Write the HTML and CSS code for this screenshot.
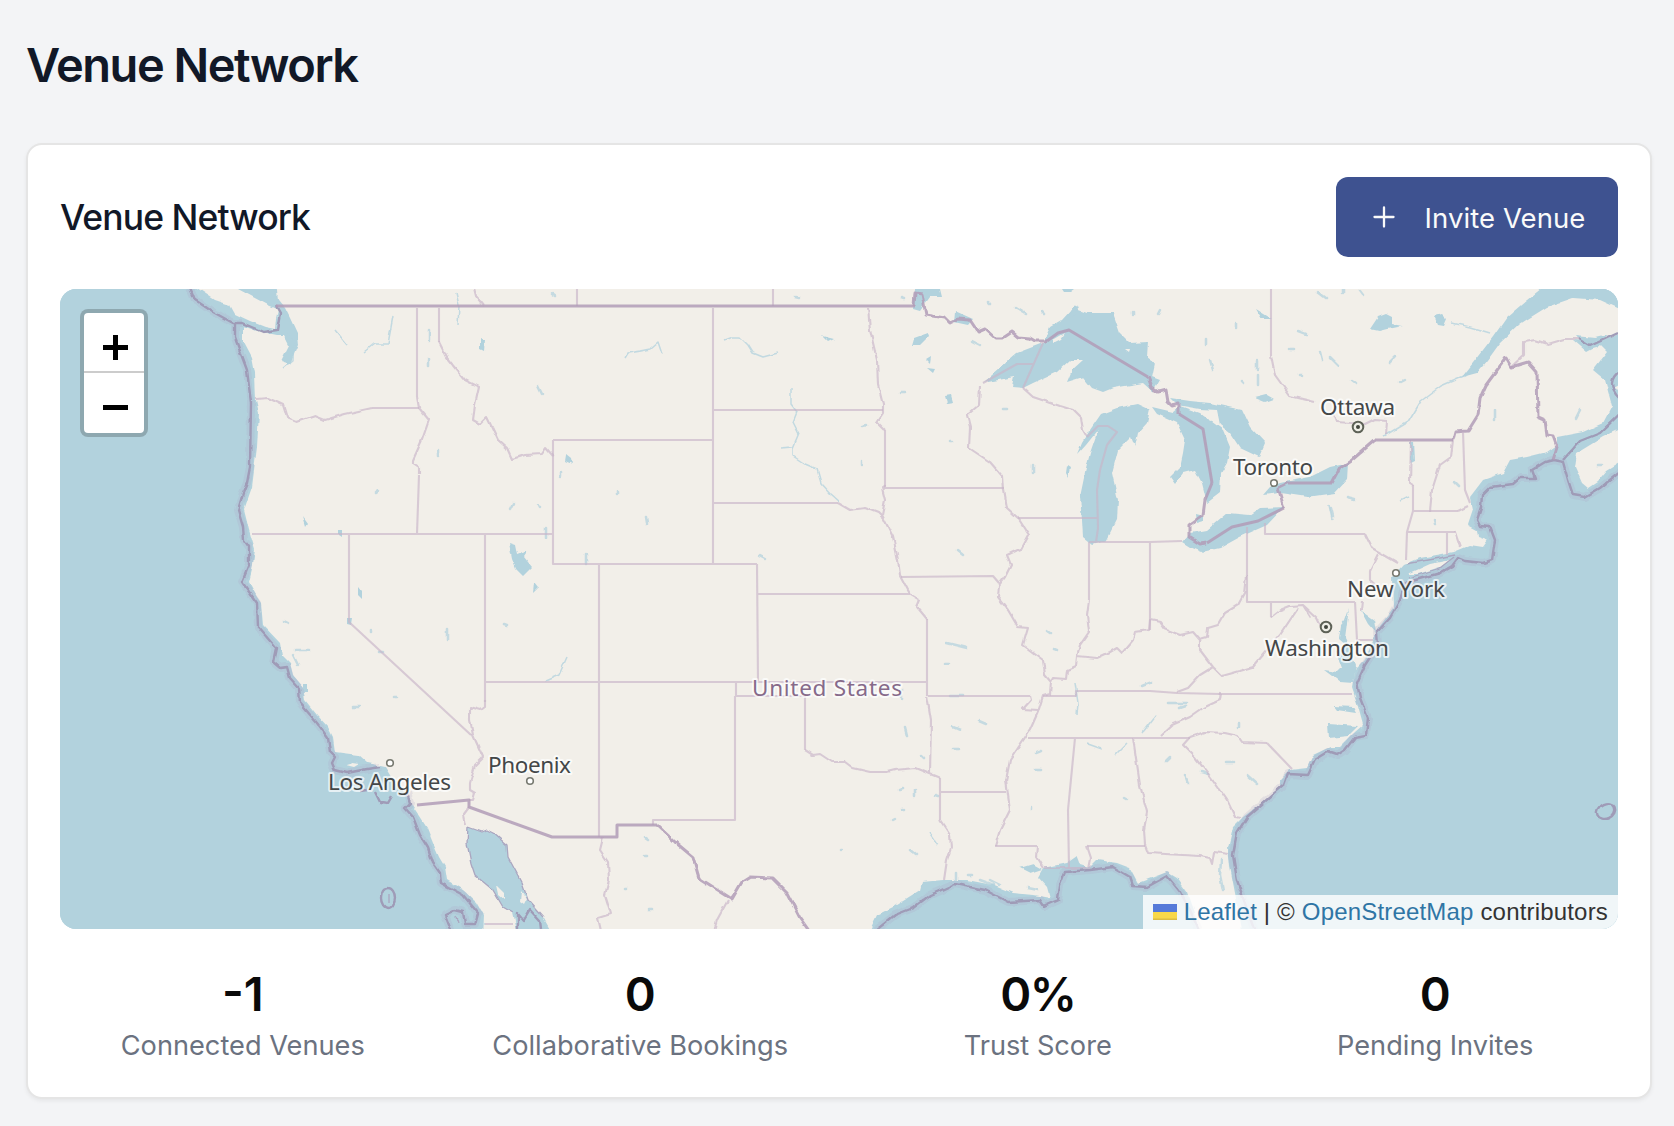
FILE: index.html
```html
<!DOCTYPE html>
<html lang="en">
<head>
<meta charset="utf-8">
<title>Venue Network</title>
<link rel="stylesheet" href="styles.css">
</head>
<body>
<main class="page">
  <h1 class="page-title">Venue Network</h1>
  <section class="card">
    <header class="card-header">
      <h2 class="card-title">Venue Network</h2>
      <button class="invite" type="button">
        <svg class="invite-icon" viewBox="0 0 32 32" aria-hidden="true"><path d="M16 6.500v19M6.500 16h19"/></svg>
        <span class="invite-label">Invite Venue</span>
      </button>
    </header>
    <div class="map">
      <svg class="map-canvas" viewBox="60 289 1558 640" aria-label="Map of the United States">
        <defs>
          <filter id="rough" filterUnits="userSpaceOnUse" x="40" y="269" width="1600" height="680">
            <feTurbulence type="fractalNoise" baseFrequency=".12" numOctaves="1" seed="4" result="n"/>
            <feDisplacementMap in="SourceGraphic" in2="n" scale="4.500" xChannelSelector="R" yChannelSelector="G"/>
          </filter>
        </defs>
        <rect class="water" x="40" y="269" width="1600" height="680"/>
        <g filter="url(#rough)">
          <!-- mainland -->
          <path class="land" d="M276 280L278 300 285 308 290 318 297 333 298 345 290 364 281 361 289 345 284 335 277 335 257 331 243 326 243 340 252 357 255 373 256 400 259 413 257 447 252 487 244 510 249 530 255 550 252 570 249 582 257 597 261 603 263 625 280 643 282 655 290 663 293 675 303 687 305 700 317 715 328 727 333 737 335 752 358 755 367 763 385 767 393 780 408 795 412 805 420 817 427 828 433 843 439 857 445 867 447 880 463 890 477 903 484 915 483 940 865 940 877 915 893 907 920 890 922 882 943 880 967 880 993 885 1013 893 1033 895 1050 898 1047 887 1038 877 1043 868 1067 863 1077 856 1080 864 1090 867 1097 860 1117 863 1130 868 1138 883 1167 872 1177 878 1188 893 1195 913 1200 940 1244 940 1235 893 1230 867 1228 847 1233 827 1243 817 1263 802 1280 787 1280 780 1290 770 1307 768 1313 755 1330 747 1340 747 1355 732 1363 725 1357 703 1352 688 1355 670 1365 660 1373 640 1377 630 1383 622 1393 608 1392 577 1403 565 1420 558 1453 552 1470 545 1483 547 1488 540 1477 530 1468 525 1473 510 1470 497 1483 480 1503 473 1510 460 1527 457 1547 452 1557 445 1557 437 1583 432 1603 423 1612 406 1605 380 1593 370 1607 352 1600 345 1587 352 1573 340 1600 342 1640 325 1640 280Z"/>
          <path class="land" d="M185 280L215 300 230 305 235 314 250 321 265 327 275 329 276 318 278 310 265 300 245 292 235 280Z"/>
          <path class="land" d="M1640 420L1603 437 1577 453 1575 467 1582 483 1588 488 1597 482 1607 470 1640 450ZM1640 372L1613 388 1640 397Z"/>
          <!-- Gulf of St Lawrence, Gulf of California -->
          <path class="water" d="M1552 280L1527 300 1507 317 1493 337 1473 363 1462 377 1477 373 1487 361 1500 343 1520 324 1547 307 1573 298 1600 300 1640 318 1640 280Z"/>
          <path class="water" d="M468 827L482 832 487 830 493 833 507 845 508 857 515 870 522 883 528 900 543 917 556 940 519 940 513 913 503 907 493 890 475 875 471 863 467 843Z"/>
          <path class="land" d="M496 885L504 893 504 899 498 894ZM521 891L527 899 524 905 520 902Z"/>
          <!-- Great Lakes -->
          <path class="water" d="M983 383L1000 368 1017 353 1043 343 1050 327 1062 320 1073 308 1087 313 1113 313 1120 333 1130 343 1148 342 1147 357 1155 363 1152 377 1160 380 1153 392 1143 383 1113 388 1103 392 1092 388 1083 377 1067 382 1072 370 1083 360 1070 360 1057 372 1033 383 1023 388 1012 387 1014 377Z"/>
          <path class="water" d="M1098 430L1086 445 1077 455 1082 443 1090 430 1101 414 1117 408 1137 404 1150 410 1147 423 1138 433 1135 447 1131 437 1118 450 1112 473 1118 500 1117 520 1107 540 1093 545 1083 537 1082 520 1080 497 1085 473 1090 453Z"/>
          <path class="water" d="M1152 407L1173 412 1180 406 1200 413 1223 430 1230 447 1227 463 1221 473 1220 493 1207 503 1202 483 1195 470 1183 473 1175 484 1170 477 1180 467 1183 453 1185 440 1177 423 1157 414Z"/>
          <path class="water" d="M1170 398L1190 401 1210 403 1242 410 1250 427 1265 443 1259 457 1240 448 1230 433 1220 425 1217 410 1200 409 1177 405Z"/>
          <path class="water" d="M1182 542L1190 533 1207 530 1227 513 1250 515 1260 508 1284 507 1267 525 1240 537 1220 548 1202 552 1190 547ZM1196 514l8 2 0 5-7 2z"/>
          <path class="water" d="M1263 495L1270 487 1280 483 1310 477 1330 467 1348 463 1347 480 1335 493 1307 497 1280 493Z"/>
          <!-- bays, inlets and larger lakes -->
          <path class="water" d="M1349 608L1345 620 1341 625 1339 639 1347 646 1336 652 1342 668 1338 672 1324 670 1340 682 1353 683 1356 666 1350 648 1345 638ZM1361 611L1374 620 1376 633 1368 624ZM1334 706l20 1 3 6-20-3zM1328 724l30 2-10 10-19 2zM1410 441l4 0 1 20-4 2zM1575 336l20 2 12-3-10 13-10 2zM1477 530l12 1 3 11-14-5zM303 684l5 0 0 8-5 0zM915 289l25 0 2 8-12 0-10 14-7-2zM955 311l18 8-5 6-14-3zM238 289l36 0 8 22-14-6z"/>
          <path class="water" d="M509 543l6 2 2 10 11-4-4 6 8 10-9 9-7-7-4-10zM534 583l4 5-5 5zM480 338l5 2-1 11-4-2zM566 455l5 4 1 5-7-3zM914 338l14-5 1 3-9 9-8 0zM926 360l5-3-1 7zM927 368l8 1-2 4zM945 396l6-1 2 7-6 1zM1067 466l3 2-2 9-2-4zM822 336l12 3-6 3zM1378 317l8-3 6 3 0 7 10 2-15 3-8 2-9-2zM1434 316l8-2 5 5-3 7-6-1zM1256 309l16 10-10 0zM1255 398l12-3 7 4-9 3zM1020 868l13-4 9 5-12 4zM358 587l4 5 0 7-4-4zM339 530l3 0 0 8-3-2zM347 619l5 0-1 6-4-1zM303 517l5 7-2 3zM1062 289l12 0-4 3-6 0zM1080 308l-8 10-4-2 6-11z"/>
          <path class="land" d="M1408 574L1430 564 1450 560 1440 567 1418 574ZM1053 340l12-7-4 6-8 4zM1125 349l5 0-1 3zM346 765l6-2 7 1-5 3zM1148 421l6-7 7 4 2 11-12 0zM1203 414l10 0 4 6-7 2z"/>
          <!-- rivers and reservoirs -->
          <path class="stream" d="M625 358l3-5 12-2 10-2 8-7 4 12M724 340l8-3 8 0 8 8 5 8 10 4 15-4M791 388v16l6 8-4 10 6 12-6 14 0 8 12 8 12 5 4 14 10 11 8 7M781 448l11-1M286 330l8 12-1 18-10 8M335 330l12 15M364 352l10-8 14 0 5-28M1473 372l-32 14-20 15-12 20-25 15M1490 333l-20-6-18-4M545 681l14-6 8-18M1075 683l3 20-1 12M1142 733l14-18M1088 744l14 5M1115 755l12-12M930 833l8 12M1408 497l-8 4M1329 505l3 14M456 293l3 12-1 20"/>
          <path class="lakes" d="M552 293l4 3M795 297l4 1M901 297l3 1M538 386l4 8M513 503l-3 6M539 505l1 2M561 472v5M618 491v3M646 518l1 6M546 528v9M586 555v10M759 556l6 3M504 624l3 1M376 492l3-2M284 621l4 2M295 650h14M293 655l5 10M353 707l6 0M371 631v2M379 652h4M394 697h2M447 630v10M429 330v10M428 360v6M438 450v6M862 426l4-1M861 462v3M958 550l5 4M901 393h4M645 838l3 2M645 855l2 0M625 889h2M649 909h3M900 790l3-1M915 789v7M921 755l3 3M935 795l3 1M892 820l2-1M904 809h-2M910 850l6 5M841 850h1M902 690v8M905 728l2 8M947 643l20 5M945 663h3M950 696h14M953 726l7 3M979 721l7 3M953 749h6M1036 753l5-2M1036 769h5M1047 631l3 2M1054 649l3 1M1031 807v2M1124 798l2 1M1170 757l-4 4M1185 775l3 8M1201 772l7 2M1226 763h7M1247 775l10 9M1239 723v5M1142 686l10-4M1168 703h20M1180 708l6-2M1221 860l-1 15 3 15M956 873v6M968 875h4M980 880l14 5M1000 885l-10-5M1028 888l10 2M1033 465v8M1003 409h4M950 441h3M1016 308l10 6M1042 312l3 3M988 302l2 2M980 345l-8-4M1133 313v2M1160 310l-2 4M1206 338v6M1236 323v5M1210 360l3 10M1257 360v10M1258 375v9M1242 381l2 2M1290 349h3M1298 331l8 3M1320 352l2 8M1330 357l8 8M1390 362l5-5M1352 380l4 3M1300 375h2M1400 382l4-2M1318 292l8 6M1343 289v4M1360 290l3 4M1495 410v10M1576 418l4-8M1597 465h4M1455 482l4 4M1434 520l1 4M1347 497l8 2M1331 508l2 8"/>
          <!-- coastal waters -->
          <path class="coast-zone" d="M187 280L195 300 213 312 233 323 242 323M235 323L235 338 247 370 251 403 250 467 247 483 243 493 238 510 243 527 244 540 249 547 249 565 242 582 257 603 258 627 276 648 273 662 280 668 287 667 290 678 299 688 300 703 317 723 328 738 330 752 335 757 332 763 335 770 347 773 367 769 380 767M407 793L410 803 405 808 413 817 420 835 428 848 433 863 440 873 441 883 463 895 478 913 475 924 465 924 463 912 455 910 445 915 453 935M1553 460L1563 462 1568 480 1573 495 1585 497 1600 488 1630 464M1553 460L1545 462 1532 470 1535 478 1520 478 1513 484 1490 487 1482 495 1481 508 1477 520 1480 526 1490 527 1495 540 1492 560 1483 563 1465 561 1458 558 1452 566 1440 573 1405 585 1400 600 1390 618 1377 632 1378 645 1365 665 1357 683 1360 698 1368 718 1366 735 1355 737 1345 750 1337 755 1328 752 1315 760 1308 775 1288 774 1284 785 1270 797 1247 817 1237 833 1233 855 1237 880 1250 918 1258 940M870 935L895 915 913 908 930 895 955 884 985 890 1008 902 1040 900 1044 906 1058 900 1060 885 1065 872 1090 870 1113 867 1130 877 1133 886 1147 887 1167 876 1180 892 1190 910 1203 940"/>
          <path class="sea-border" d="M187 280L195 300 213 312 233 323 242 323 263 332 277 330 280 313 276 306M235 323L235 338 247 370 251 403 250 467 247 483 243 493 238 510 243 527 244 540 249 547 249 565 242 582 257 603 258 627 276 648 273 662 280 668 287 667 290 678 299 688 300 703 317 723 328 738 330 752 335 757 332 763 335 770 347 773 367 769 380 767M407 793L410 803 405 808 413 817 420 835 428 848 433 863 440 873 441 883 463 895 478 913 475 924 465 924 463 912 455 910 445 915 453 935M1553 460L1563 462 1568 480 1573 495 1585 497 1600 488 1630 464M1563 460L1580 441 1600 433 1630 404M1553 460L1545 462 1532 470 1535 478 1520 478 1513 484 1490 487 1482 495 1481 508 1477 520 1480 526 1490 527 1495 540 1492 560 1483 563 1465 561 1458 558 1452 566 1440 573 1405 583 1400 600 1390 618 1377 632 1378 645 1365 665 1357 683 1360 698 1368 718 1366 735 1355 737 1345 750 1337 755 1328 752 1315 760 1308 775 1288 774 1284 785 1270 797 1247 817 1237 833 1233 855 1237 880 1250 918 1258 940M870 935L895 915 913 908 930 895 955 884 985 890 1008 902 1040 900 1044 906 1058 900 1060 885 1065 872 1090 870 1113 867 1130 877 1133 886 1147 887 1167 876 1180 892 1190 910 1203 940M518 940L518 913 524 920 530 910 540 921 541 929M1578 339L1590 346 1618 333M1621 370Q1604 382 1619 398M367 790L360 791M375 792L380 802 388 803 392 796"/>
          <ellipse class="sea-border" cx="388" cy="898" rx="7" ry="10"/>
          <ellipse class="sea-border" cx="1606" cy="811" rx="9.500" ry="7.500" transform="rotate(-25 1606 811)"/>
          <path class="coast-line" d="M389 894v8M456 917l2 6M468 827L482 832 487 830 493 833 507 845 508 857 515 870 522 883 528 900 543 917M513 913L503 907 493 890 475 875 471 863 467 843 468 827M1406 564L1440 558 1455 555M1409 578L1440 568 1454 557"/>
          <!-- river-following state lines -->
          <path class="state" d="M256 399L268 398 283 405 287 418 297 422 315 416 325 420 345 414 372 408M417 397L419 408 429 420 422 440 413 460 413 463 419 467 419 475M472 280L476 296 484 306M439 342L447 358 465 380 479 387 475 405 473 420 480 424 487 417 498 440 507 448 512 459 525 455 542 454 546 448 553 456M485 700L485 707 481 710 470 707 470 720 473 735 483 757 475 765 470 783 470 790 475 793 473 800 469 800M838 503L850 510 865 508 878 513 883 518M868 308L870 330 877 360 878 385 883 405 883 413 877 422 885 430M885 486L882 488 885 500 882 515 893 537 898 560 900 575 910 594 920 600 917 607 927 619M927 696L931 720 930 774M805 750L813 755 820 754 832 762 845 762 853 768 870 772 887 772 895 770 915 768 930 774 940 778M940 820L950 835 951 848 947 860 944 880M1030 696L1031 700 1023 709 1038 710M980 386L979 405 967 415 970 427 969 448 990 462 1003 477 1004 490 1007 508 1018 518 1029 535 1022 548 1007 555 1011 565 1005 577 999 585 998 597 1008 610 1018 627 1028 628 1023 645 1043 660 1045 675 1051 682 1050 694 1043 696 1038 712 1030 730 1020 745 1010 760 1006 780 1010 810 1000 830 995 846M1037 846L1036 857 1043 868M1051 682L1053 678 1066 679 1067 670 1076 666 1077 656 1097 658 1110 652 1117 648 1122 653 1133 640 1135 632 1149 630 1150 620 1160 622 1165 629 1180 635 1193 632 1200 640 1207 638 1208 628 1218 625 1225 613 1238 605 1244 594 1246 575M1089 600L1087 615 1089 632 1080 645 1077 656M1023 388L1033 397 1060 406 1073 410 1081 418 1083 430 1087 437M1365 534L1372 548 1398 563M1378 554L1370 570 1370 580 1378 587M1362 602L1361 611M1271 617L1280 610 1290 606 1303 605 1311 618M1298 608L1290 620 1280 635 1263 655 1253 667 1240 671 1222 676 1213 667 1200 650 1200 640M1303 605L1317 618 1322 628M1213 667L1200 675 1188 688 1177 692M1221 693L1220 700 1203 708 1190 717 1172 725 1161 735M1190 737L1205 732 1225 733 1238 736 1242 742 1267 743M1190 737L1183 745 1195 757 1213 780 1227 800 1235 817 1241 818M1133 738L1140 785 1147 812 1144 830 1145 845 1148 853 1200 856 1210 858 1212 864 1214 852 1228 854M1087 846L1091 858 1089 868M1411 440L1410 483 1413 485M1453 440L1451 457 1440 465 1432 490 1430 511M1455 532L1460 547M1458 511L1468 506M1271 355L1275 375 1290 396 1315 402M1333 412L1337 422 1365 424 1375 419 1387 420 1386 435M1511 367L1524 355 1524 342 1535 340 1548 344 1565 339 1578 339M469 807L463 815 465 825M603 838L600 850 608 862 609 880 605 895 611 914 598 918 602 935M728 900L717 920 713 935M1044 868L1090 868"/>
          <path class="nation" d="M914 306L915 293 922 294 926 315 945 318 950 323 958 319 970 320 978 332 985 329 995 338 1003 338 1012 332 1018 337 1030 338 1035 341 1047 341M1148 377L1152 388 1158 392 1166 390 1168 402 1172 406 1179 404 1179 414M1212 483L1205 500 1203 515 1189 525 1189 537 1200 544 1207 543M1284 508L1278 488 1288 483M1332 483L1340 468 1352 460 1375 440M1453 440L1455 432 1468 431 1478 415 1480 398 1486 385 1506 358 1511 367 1528 362 1537 372 1538 417 1545 420 1547 435 1553 436 1557 447 1553 460M657 825L675 842 693 857 699 878 732 899 742 882 750 877 772 878 787 893 800 918 812 935"/>
        </g>
        <!-- surveyed lines -->
        <path class="state" d="M417 308V397M372 408H419M419 475L417 534M252 534H553M349 534V622L471 735M485 534V702M439 308V342M553 440H713M553 440V564H757M713 308V564M757 564L758 682M599 564V837M485 682H927M713 410H883M713 503H838M885 430V488H1004M757 594H910M927 619V696M736 682V696H805M735 696V820H653V825M805 696V750M940 778V820M940 792H1006M928 696H1030M901 577L993 576 999 583M995 846H1037M1089 542V600M1150 542V630M1089 542H1150L1182 541M1018 518H1098M1247 527V602H1355M1265 523V534H1365M1271 602V617M1043 696H1076V691H1150L1177 693 1220 694H1352M1028 738H1190M1267 743L1292 769M1075 738L1068 810 1069 868M1087 846H1145M1355 602L1357 640H1373M1413 485V511H1458M1413 511L1407 532 1406 560M1407 532H1455M1447 532V555M1463 432L1465 490 1470 503M1271 289V356M577 289V306M773 289V306M485 924H513M983 383L1017 364H1033M1043 343L1023 388M1087 437L1098 426H1108L1117 432 1107 445 1100 470 1097 490 1098 528 1096 542"/>
        <path class="nation" d="M276 306H915M1047 341L1058 333 1069 330 1148 377M1179 414L1203 429 1212 483M1207 543L1232 527 1258 521 1284 508M1288 483H1332M1375 440H1453M417 805L469 800V807L552 837H617V825H657"/>
        <g class="towns">
          <circle cx="390" cy="763" r="3.300"/><circle cx="530" cy="781" r="3.300"/><circle cx="1274" cy="483" r="3.300"/><circle cx="1396" cy="573" r="3.300"/>
          <circle class="capital" cx="1358" cy="427" r="5.300"/><circle class="capital" cx="1326" cy="627" r="5.300"/>
          <circle class="dot" cx="1358" cy="427" r="2"/><circle class="dot" cx="1326" cy="627" r="2"/>
        </g>
        <g class="labels">
          <text x="1320" y="414.500" textLength="75">Ottawa</text>
          <text x="1233" y="475" textLength="80">Toronto</text>
          <text x="1347" y="597" textLength="98">New York</text>
          <text x="1265" y="656" textLength="124">Washington</text>
          <text x="328" y="789.500" textLength="123">Los Angeles</text>
          <text x="488" y="773" textLength="83">Phoenix</text>
          <text class="country" x="752" y="695.500" textLength="150">United States</text>
        </g>
      </svg>
      <div class="zoom-control">
        <button class="zoom-button" type="button" aria-label="Zoom in"><svg viewBox="0 0 25 25"><path d="M12.500 0v25M0 12.500h25"/></svg></button>
        <button class="zoom-button" type="button" aria-label="Zoom out"><svg viewBox="0 0 25 25"><path d="M0 12.500h25"/></svg></button>
      </div>
      <div class="attribution">
        <svg class="flag" viewBox="0 0 24 16" aria-hidden="true"><path fill="#557ad9" d="M0 0h24v8H0z"/><path fill="#f8d84a" d="M0 8h24v8H0z"/><path fill="#dcbd43" d="M0 14.500h24V16H0z"/></svg>
        <span><a>Leaflet</a> | © <a>OpenStreetMap</a> contributors</span>
      </div>
    </div>
    <div class="stats">
      <div class="stat"><div class="stat-value">-1</div><div class="stat-label">Connected Venues</div></div>
      <div class="stat"><div class="stat-value">0</div><div class="stat-label">Collaborative Bookings</div></div>
      <div class="stat"><div class="stat-value percent">0%</div><div class="stat-label">Trust Score</div></div>
      <div class="stat"><div class="stat-value">0</div><div class="stat-label">Pending Invites</div></div>
    </div>
  </section>
</main>
</body>
</html>
```
FILE: styles.css
```css
* { box-sizing: border-box; }
body {
  margin: 0;
  background: #f3f4f6;
  color: #0a0a0a;
  font-family: Inter, "Liberation Sans", sans-serif;
}
.page { height: 1126px; padding: 33px 22px 27px 26px; overflow: hidden; }
.page-title {
  margin: 0 0 46px;
  color: #111827;
  font-size: 47px;
  font-weight: 600;
  line-height: 64px;
  letter-spacing: -1.480px;
}
.card {
  height: 956px;
  padding: 32px;
  border: 2px solid #e5e5e5;
  border-radius: 16px;
  background: #fff;
  box-shadow: 0 2px 4px rgba(0, 0, 0, .06);
}
.card-header { display: flex; align-items: center; justify-content: space-between; height: 80px; margin-bottom: 32px; }
.card-title { margin: 0; padding-top: 2px; color: #111827; font-size: 35.500px; font-weight: 500; line-height: 56px; letter-spacing: -.920px; }
.invite {
  display: flex;
  align-items: center;
  gap: 24.500px;
  width: 282px;
  height: 80px;
  padding: 0 32px;
  border: 0;
  border-radius: 12px;
  background: #3e5290;
  color: #fafafa;
  font: 400 27.500px/40px Inter, "Liberation Sans", sans-serif;
}
.invite-icon { flex: none; width: 32px; height: 32px; fill: none; stroke: #fafafa; stroke-width: 2.300; stroke-linecap: round; }
.invite-label { padding-top: 1px; letter-spacing: .080px; white-space: nowrap; }
.map { position: relative; height: 640px; overflow: hidden; border-radius: 16px; background: #b2d2dd; }
.map-canvas { display: block; width: 100%; height: 100%; }
.map-canvas path, .map-canvas ellipse { stroke-linejoin: round; }
.water { fill: #b2d2dd; }
.land { fill: #f2efe9; }
.stream { fill: none; stroke: #b2d2dd; stroke-width: 1.500; opacity: .75; }
.lakes { fill: none; stroke: #b2d2dd; stroke-width: 2.500; opacity: .7; stroke-linecap: round; }
.coast-zone { fill: none; stroke: #a99fc2; stroke-width: 8; opacity: .2; }
.sea-border { fill: none; stroke: #9f9bb7; stroke-width: 2.400; }
.coast-line { fill: none; stroke: #aaa6c0; stroke-width: 1.300; }
.state { fill: none; stroke: #c9b5c9; stroke-width: 2.100; opacity: .66; }
.nation { fill: none; stroke: #b19cb7; stroke-width: 3; opacity: .85; }
.towns circle { fill: #fff; stroke: #777970; stroke-width: 1.600; }
.towns .capital { fill: #eeeee6; stroke: #5e6257; stroke-width: 2; }
.towns .dot { fill: #41453d; stroke: none; }
.labels {
  fill: #444748;
  stroke: rgba(255, 255, 255, .7);
  stroke-width: 4;
  stroke-linejoin: round;
  paint-order: stroke;
  font: 22.500px "Noto Sans", sans-serif;
}
.labels .country { fill: #866a8a; }
.zoom-control {
  position: absolute;
  top: 20px;
  left: 20px;
  width: 68px;
  border: 4px solid rgba(0, 0, 0, .2);
  border-radius: 8px;
  background: #fff;
  background-clip: padding-box;
}
.zoom-button {
  display: flex;
  align-items: center;
  justify-content: center;
  width: 60px;
  height: 60px;
  padding: 10px 0 0 2px;
  border: 0;
  border-bottom: 2px solid #ccc;
  border-radius: 0;
  background: transparent;
}
.zoom-button:last-child { border-bottom: 0; padding-top: 9px; }
.zoom-button svg { width: 25px; height: 25px; fill: none; stroke: #000; stroke-width: 5; }
.attribution {
  position: absolute;
  right: 0;
  bottom: 0;
  display: flex;
  align-items: center;
  gap: 7px;
  height: 34px;
  padding: 0 10px;
  background: rgba(255, 255, 255, .8);
  color: #333;
  font: 24px/34px "Liberation Sans", Arial, sans-serif;
  letter-spacing: .180px;
  white-space: nowrap;
}
.attribution a { color: #2f75a5; }
.flag { flex: none; width: 24px; height: 16px; }
.stats { display: grid; grid-template-columns: repeat(4, 1fr); gap: 32px; margin-top: 33px; text-align: center; }
.stat-value { font-size: 47px; font-weight: 600; line-height: 64px; }
.percent { letter-spacing: -1.500px; }
.stat-label { color: #6b7280; font-size: 27.200px; line-height: 40px; white-space: nowrap; }
```
